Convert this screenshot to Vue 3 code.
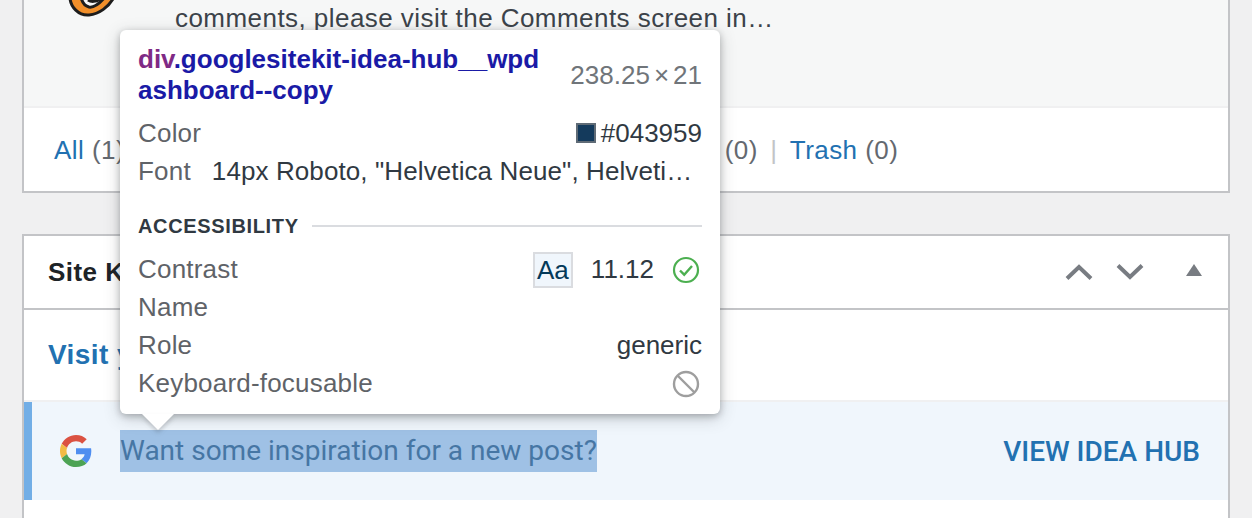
<script setup>
const tabs = [
  { label: 'All', count: 1 },
  { label: 'Mine', count: 0 },
  { label: 'Pending', count: 0 },
  { label: 'Approved', count: 0 },
  { label: 'Spam', count: 0 },
  { label: 'Trash', count: 0 },
]
</script>

<template>
  <div class="page">
    <section class="card comments">
      <div class="comment-row">
        <svg class="avatar" width="50" height="18" viewBox="0 0 50 18">
          <path d="M3-3C3 7 12 16 22 15 32 14 42 7 47-3H38C33 3 27 8 22 7 18 6 15 2 14-3Z" fill="#f18f2a" stroke="#1d1d1d" stroke-width="3" />
          <path d="M21 0c3 2 8 2 12-1" fill="none" stroke="#1d1d1d" stroke-width="3" />
        </svg>
        <p class="comment-text">comments, please visit the Comments screen in…</p>
      </div>
      <div class="tabs">
        <template v-for="(tab, i) in tabs" :key="tab.label">
          <span v-if="i > 0" class="sep">|</span>
          <span><a class="link">{{ tab.label }}</a> <span class="count">({{ tab.count }})</span></span>
        </template>
      </div>
    </section>

    <section class="card site-kit">
      <header class="widget-head">
        <h2>Site Kit</h2>
        <div class="widget-actions">
          <svg width="28" height="16" viewBox="0 0 28 16"><path d="M2 14.5L14 3l12 11.5" fill="none" stroke="#787c82" stroke-width="4" /></svg>
          <svg width="28" height="16" viewBox="0 0 28 16"><path d="M2 1.5L14 13 26 1.5" fill="none" stroke="#787c82" stroke-width="4" /></svg>
          <svg class="collapse" width="16" height="12" viewBox="0 0 16 12"><path d="M8 0l8 12H0z" fill="#787c82" /></svg>
        </div>
      </header>
      <div class="visit"><a class="visit-link">Visit your dashboard</a></div>
      <div class="notice">
        <svg class="g-logo" width="32" height="32" viewBox="0 0 48 48">
          <path fill="#db5242" d="M24 9.5c3.54 0 6.71 1.22 9.21 3.6l6.85-6.85C35.9 2.38 30.47 0 24 0 14.62 0 6.51 5.38 2.56 13.22l7.98 6.19C12.43 13.72 17.74 9.5 24 9.5z" />
          <path fill="#4f8ef0" d="M46.98 24.55c0-1.57-.15-3.09-.38-4.55H24v9.02h12.94c-.58 2.96-2.26 5.48-4.78 7.18l7.73 6c4.51-4.18 7.09-10.36 7.09-17.65z" />
          <path fill="#f2bb45" d="M10.53 28.59c-.48-1.45-.76-2.99-.76-4.59s.27-3.14.76-4.59l-7.98-6.19C.92 16.46 0 20.12 0 24c0 3.88.92 7.54 2.56 10.78l7.97-6.19z" />
          <path fill="#4da354" d="M24 48c6.48 0 11.93-2.13 15.89-5.81l-7.73-6c-2.15 1.45-4.92 2.3-8.16 2.3-6.26 0-11.57-4.22-13.47-9.91l-7.98 6.19C6.51 42.62 14.62 48 24 48z" />
        </svg>
        <span class="notice-text">Want some inspiration for a new post?</span>
        <a class="notice-action">VIEW IDEA HUB</a>
      </div>
      <div class="card-rest"></div>
    </section>

    <div class="inspector">
      <div class="insp-title">
        <div class="selector"><span class="tag">div</span>.googlesitekit-idea-hub__wpd<br />ashboard--copy</div>
        <div class="size">238.25<span class="times">×</span>21</div>
      </div>
      <div class="insp-row">
        <span class="key">Color</span>
        <span class="val color-val"><i class="swatch"></i>#043959</span>
      </div>
      <div class="insp-row">
        <span class="key">Font</span>
        <span class="val font-val">14px Roboto, "Helvetica Neue", Helvetica, Arial, sans-serif</span>
      </div>
      <div class="insp-section"><span>ACCESSIBILITY</span><i class="rule"></i></div>
      <div class="insp-row">
        <span class="key">Contrast</span>
        <span class="val contrast">
          <span class="aa">Aa</span>
          <span class="ratio">11.12</span>
          <svg width="28" height="28" viewBox="0 0 28 28">
            <circle cx="14" cy="14" r="12" fill="none" stroke="#4caf50" stroke-width="2.2" />
            <path d="M8 14.5l4.2 4.2L20 10" fill="none" stroke="#4caf50" stroke-width="2.4" />
          </svg>
        </span>
      </div>
      <div class="insp-row"><span class="key">Name</span></div>
      <div class="insp-row">
        <span class="key">Role</span>
        <span class="val">generic</span>
      </div>
      <div class="insp-row">
        <span class="key">Keyboard-focusable</span>
        <svg class="ban" width="28" height="28" viewBox="0 0 28 28">
          <circle cx="14" cy="14" r="12" fill="none" stroke="#9e9e9e" stroke-width="2.4" />
          <path d="M5.5 5.5l17 17" fill="none" stroke="#9e9e9e" stroke-width="2.4" />
        </svg>
      </div>
      <i class="arrow"></i>
    </div>
  </div>
</template>

<style scoped>
.page {
  position: relative;
  width: 1252px;
  height: 518px;
  overflow: hidden;
  padding: 0 22px;
  box-sizing: border-box;
  background: #f0f0f1;
  font-family: "Liberation Sans", Arial, sans-serif;
  font-size: 26px;
  letter-spacing: 0.45px;
  color: #3c434a;
}
.card {
  border: 2px solid #c3c4c7;
  background: #fff;
}
.comments {
  border-top: 0;
  height: 193px;
  box-sizing: border-box;
}
.comment-row {
  height: 106px;
  background: #f6f7f7;
  border-bottom: 2px solid #f0f0f1;
  display: flex;
  align-items: flex-start;
  padding-left: 43px;
}
.avatar {
  flex: none;
  display: block;
}
.comment-text {
  margin: 2px 0 0 58px;
  line-height: 32px;
}
.tabs {
  display: flex;
  align-items: center;
  gap: 12.4px;
  height: 85px;
  padding-left: 30px;
}
.link {
  color: #2271b1;
}
.count {
  color: #646970;
}
.sep {
  color: #c3c4c7;
}
.site-kit {
  margin-top: 41px;
  border-bottom: 0;
}
.widget-head {
  height: 72px;
  border-bottom: 2px solid #c3c4c7;
  display: flex;
  align-items: center;
  justify-content: space-between;
  padding: 0 26px 0 24px;
}
.widget-head h2 {
  margin: 0;
  font-size: 26px;
  font-weight: 700;
  color: #1d2327;
}
.widget-actions {
  display: flex;
  align-items: center;
  gap: 23px;
}
.widget-actions svg {
  display: block;
}
.collapse {
  margin-left: 19px;
  margin-top: -4px;
}
.visit {
  height: 90px;
  display: flex;
  align-items: center;
  padding-left: 24px;
  border-bottom: 2px solid #f0f0f1;
}
.visit-link {
  color: #2271b1;
  font-size: 28px;
  font-weight: 700;
}
.notice {
  height: 98px;
  box-sizing: border-box;
  border-left: 8px solid #72aee6;
  background: #f0f6fc;
  display: flex;
  align-items: center;
  padding: 0 28px;
  letter-spacing: 0;
}
.g-logo {
  flex: none;
  margin-right: 28px;
}
.notice-text {
  font-family: Roboto, sans-serif;
  font-size: 28px;
  line-height: 42px;
  color: #4676a4;
  background: #9fc1e5;
}
.notice-action {
  margin-left: auto;
  font-family: Roboto, sans-serif;
  font-size: 28px;
  font-weight: 500;
  color: #2271b1;
}
.card-rest {
  height: 20px;
}
.inspector {
  position: absolute;
  left: 120px;
  top: 30px;
  width: 600px;
  height: 384px;
  box-sizing: border-box;
  padding: 14px 18px;
  background: #fff;
  border-radius: 6px;
  letter-spacing: 0;
  box-shadow: 0 2px 6px rgba(60, 64, 67, 0.3), 0 4px 16px rgba(60, 64, 67, 0.25);
}
.insp-title {
  display: flex;
  justify-content: space-between;
  align-items: center;
  height: 62px;
  margin-bottom: 8px;
}
.selector {
  font-weight: 700;
  line-height: 31px;
  color: #1a1aa6;
}
.tag {
  color: #7f2a85;
}
.size {
  font-size: 26px;
  color: #70757a;
}
.times {
  margin: 0 4px;
}
.insp-row {
  display: flex;
  justify-content: space-between;
  align-items: center;
  height: 38px;
}
.key {
  color: #5f6368;
  flex: none;
  letter-spacing: 0.2px;
}
.val {
  color: #303942;
}
.color-val {
  display: flex;
  align-items: center;
  gap: 5px;
}
.swatch {
  width: 20px;
  height: 20px;
  box-sizing: border-box;
  border: 2px solid #5f6b76;
  background: #143a5c;
}
.font-val {
  margin-left: 21px;
  width: 483px;
  margin-right: 8px;
  letter-spacing: 0.1px;
  overflow: hidden;
  white-space: nowrap;
  text-overflow: ellipsis;
}
.insp-section {
  display: flex;
  align-items: center;
  gap: 13px;
  height: 30px;
  margin-top: 21px;
  margin-bottom: 9px;
  font-size: 20px;
  font-weight: 700;
  letter-spacing: 0.65px;
  color: #303942;
}
.rule {
  flex: 1;
  height: 2px;
  background: #dadce0;
}
.contrast {
  display: flex;
  align-items: center;
}
.aa {
  width: 40px;
  height: 36px;
  box-sizing: border-box;
  border: 2px solid #dadce0;
  background: #f0f6fc;
  color: #043959;
  text-align: center;
  line-height: 32px;
  margin-top: 2px;
  margin-left: -1px;
}
.ratio {
  margin: 0 18px 0 19px;
  margin-left: 18px;
}
.contrast svg {
  margin-right: 2px;
  margin-top: 2px;
}
.ban {
  margin-right: 2px;
  margin-top: 2px;
}
.arrow {
  position: absolute;
  left: 22px;
  bottom: -16px;
  width: 0;
  height: 0;
  border-left: 16px solid transparent;
  border-right: 16px solid transparent;
  border-top: 16px solid #fff;
  filter: drop-shadow(0 3px 2px rgba(60, 64, 67, 0.25));
}
</style>

<style>
html, body {
  margin: 0;
}
</style>
